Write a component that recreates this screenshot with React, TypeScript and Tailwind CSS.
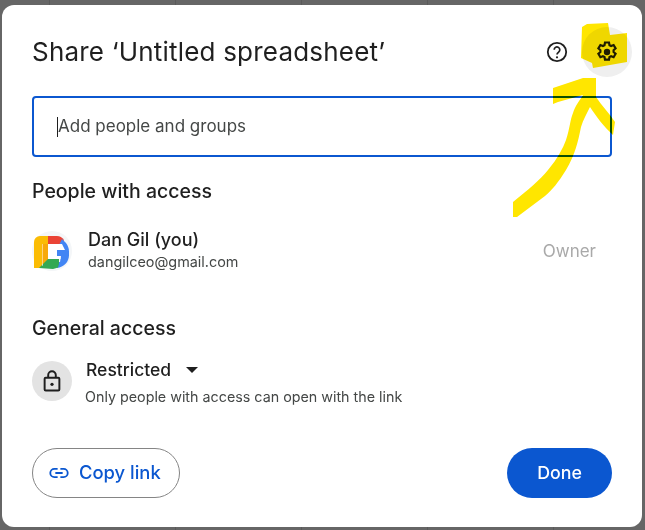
import React from "react";

const font = { fontFamily: "Inter, 'Liberation Sans', sans-serif" };

function Avatar() {
  return (
    <svg width="40" height="40" viewBox="0 0 40 40" className="shrink-0">
      <circle cx="20" cy="20" r="20" fill="#f4f6f8" />
      <path d="M2 37V11a6 6 0 0 1 6-6h10v8h-8v24z" fill="#fbbc04" />
      <path d="M10 13h6v20h-6z" fill="#f7a90a" />
      <path d="M16 5h9c3 0 5 1.500 7 4l-2 4H16z" fill="#ea4335" />
      <path d="M30 8l4 4c2 3 3 5 3 9v3c0 7-5 12-12 13l-1-6h4l1-6h-5v-5z" fill="#4285f4" />
      <path d="M7 37l9-9h11v5l-1 3.500c-1.500.5-3 1-5 1.500z" fill="#34a853" />
      <path d="M16 13h14l3 6h-8v9h-9z" fill="#ffffff" />
      <path d="M25 20h12v5H25z" fill="#4285f4" />
      <path d="M25 25h3.500v3H25z" fill="#ffffff" />
      <path d="M10 13h.7v22H10z" fill="#ffffff" fillOpacity="0.7" />
    </svg>
  );
}

export default function App() {
  return (
    <div
      className="relative w-[645px] h-[530px] overflow-hidden bg-[#666666] bg-[linear-gradient(to_right,#5a5a5a_1px,transparent_1px)] bg-[length:126px_100%] bg-[position:49px_0] pt-[5px] pl-[2px] pr-[3px] pb-[3px]"
      style={font}
    >
      <div className="flex h-[522px] flex-col rounded-[12px] bg-white px-[30px] text-[#1f1f1f]">
        {/* Header */}
        <div className="flex h-[91px] shrink-0 items-center justify-between pt-[3px]">
          <h1 className="text-[26px] leading-[32px] tracking-[0.2px] font-normal">
            Share ‘Untitled spreadsheet’
          </h1>
          <div className="mr-[-20px] flex items-center gap-[13px]">
            <svg width="24" height="24" viewBox="0 0 24 24" fill="none" stroke="#1f1f1f" strokeWidth="1.800">
              <circle cx="12" cy="12" r="9.200" />
              <path d="M9.200 9.800a2.800 2.800 0 1 1 4.600 2.100c-1.100.9-1.800 1.400-1.800 2.700" strokeWidth="1.700" />
              <circle cx="12" cy="17.300" r="1.100" fill="#1f1f1f" stroke="none" />
            </svg>
            <div className="flex h-[50px] w-[50px] items-center justify-center rounded-full bg-[#efefef]">
              <svg width="24" height="24" viewBox="0 0 24 24" fill="none" stroke="#1f1f1f" strokeWidth="2.200">
                <path d="M10 2.500h4l.5 2.700 1.600.8 2.500-1 2 3.400-2 1.800v1.800l2 1.800-2 3.400-2.500-1-1.600.8-.5 2.700h-4l-.5-2.700-1.600-.8-2.500 1-2-3.400 2-1.800v-1.800l-2-1.800 2-3.400 2.500 1 1.600-.8z" strokeLinejoin="miter" />
                <circle cx="12" cy="12" r="3.200" fill="#1f1f1f" stroke="none" />
              </svg>
            </div>
          </div>
        </div>

        {/* Input */}
        <div className="flex h-[61px] shrink-0 items-center rounded-[4px] border-2 border-[#0b57d0] pl-[23px]">
          <span className="h-[20px] w-px bg-[#1f1f1f]" />
          <span className="text-[17px] text-[#444746]">Add people and groups</span>
        </div>

        <h2 className="mt-[21px] text-[19.500px] leading-[26px] font-medium">People with access</h2>

        <div className="mt-[25px] flex items-center">
          <Avatar />
          <div className="ml-[16px] flex-1">
            <div className="text-[18px] leading-[22px] font-medium">Dan Gil (you)</div>
            <div className="text-[14.400px] leading-[22px] text-[#444746]">dangilceo@gmail.com</div>
          </div>
          <span className="mr-[16px] mt-[2px] text-[17px] text-[#a9a9a9]">Owner</span>
        </div>

        <h2 className="mt-[42px] text-[19.500px] leading-[26px] font-medium">General access</h2>

        <div className="mt-[17px] flex items-start">
          <div className="mt-[3px] flex h-[40px] w-[40px] shrink-0 items-center justify-center rounded-full bg-[#e3e3e3]">
            <svg width="26" height="26" viewBox="0 0 24 24" fill="none" stroke="#1f1f1f" strokeWidth="1.800">
              <rect x="5.200" y="9" width="13.600" height="11.800" rx="1" />
              <path d="M8.500 9V6.500a3.500 3.500 0 0 1 7 0V9" />
              <circle cx="12" cy="15" r="1.500" fill="#1f1f1f" stroke="none" />
            </svg>
          </div>
          <div className="ml-[14px]">
            <div className="flex items-center">
              <span className="text-[17.500px] leading-[24px] font-medium">Restricted</span>
              <span className="ml-[15px] h-0 w-0 border-x-[6px] border-t-[6px] border-x-transparent border-t-[#1f1f1f]" />
            </div>
            <div className="ml-[-1px] mt-[5px] text-[14.300px] leading-[20px] text-[#444746]">
              Only people with access can open with the link
            </div>
          </div>
        </div>

        {/* Footer */}
        <div className="mt-[41px] flex items-center justify-between">
          <button className="flex h-[50px] w-[148px] items-center rounded-full border border-[#858585] bg-white pl-[15px] text-[#0b57d0]">
            <svg width="22" height="22" viewBox="0 0 24 24" fill="none" stroke="#0b57d0" strokeWidth="2">
              <path d="M10.500 7.500H7a4.500 4.500 0 0 0 0 9h3.500M13.500 7.500H17a4.500 4.500 0 0 1 0 9h-3.500M8 12h8" />
            </svg>
            <span className="ml-[9px] text-[18.400px] font-medium">Copy link</span>
          </button>
          <button className="h-[50px] w-[105px] rounded-full bg-[#0b57d0] text-[17.800px] font-medium text-white">
            Done
          </button>
        </div>
      </div>

      {/* Yellow marker annotations drawn over the dialog */}
      <svg className="pointer-events-none absolute left-0 top-0 mix-blend-multiply" width="645" height="530" viewBox="0 0 645 530">
        <path
          d="M582 27 L587 24 L608 23 L610 35 L627 33 L627 62 L593 68 L592 63 L581 58 Z"
          fill="#ffe600"
        />
        <path
          d="M513 202 C528 190 540 180 548 170 C558 158 563 148 566 140 C570 128 570 120 573 113 C575 106 580 100 583 95 L558 102 L553 104 L553 88 L583 78 L596 78 L596 97 C602 106 609 113 615 122 L613 135 C604 127 596 116 590 107 C587 113 583 120 581 127 C578 142 575 155 566 170 C558 183 552 190 545 196 L517 217 L513 217 Z"
          fill="#ffe600"
        />
      </svg>
    </div>
  );
}
